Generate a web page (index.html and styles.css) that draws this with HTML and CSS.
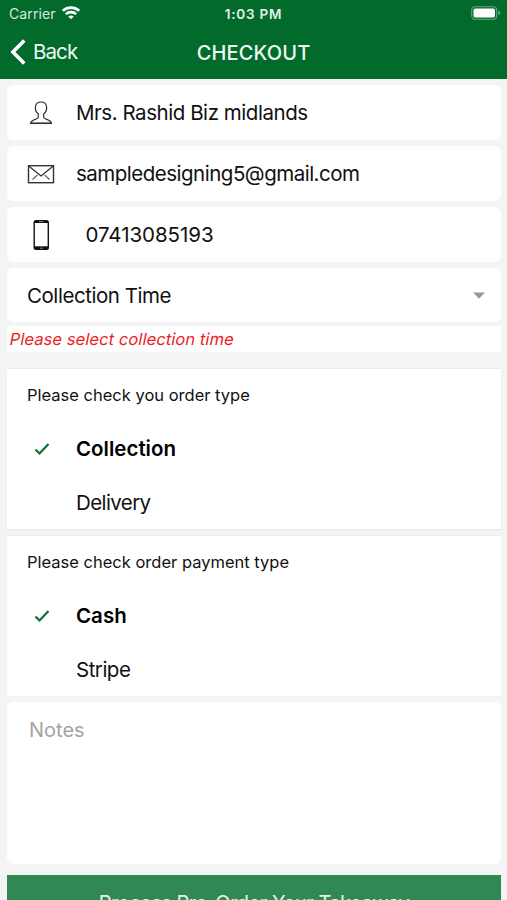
FILE: index.html
```
<!DOCTYPE html>
<html lang="en">
<head>
<meta charset="utf-8">
<title>Checkout</title>
<link rel="stylesheet" href="styles.css">
</head>
<body>
<header class="header">
  <div class="status">
    <div class="carrier"><span class="carrier-name">Carrier</span>
      <svg class="wifi" width="18" height="14" viewBox="0 0 18 14" fill="none" stroke="#fff" stroke-width="2.6"><path d="M.8 4.800C5.300.6 12.700.6 17.200 4.800M3.800 8.100C6.800 5.400 11.200 5.400 14.200 8.100"/><path d="M9 13.300 6.200 10.500Q9 8.300 11.800 10.500Z" fill="#fff" stroke="none"/></svg>
    </div>
    <span class="clock">1:03 PM</span>
    <svg class="battery" width="30" height="14" viewBox="0 0 30 14"><rect x=".7" y=".7" width="25" height="12.600" rx="3.500" fill="none" stroke="#69a77c" stroke-width="1.100"/><rect x="2.500" y="2.500" width="21.500" height="9" rx="1.800" fill="#fff"/><path d="M27.300 4.600Q29.500 6 29.500 7T27.300 9.400Z" fill="#69a77c"/></svg>
  </div>
  <nav class="nav">
    <a class="back"><svg width="16" height="26" viewBox="0 0 16 26" fill="none" stroke="#fff" stroke-width="3.600"><path d="M14.300 1.500 2.900 13l11.400 11.500"/></svg><span class="back-label">Back</span></a>
    <h1 class="title">CHECKOUT</h1>
  </nav>
</header>
<main class="form">
  <div class="field">
    <svg class="icon" width="28" height="32" viewBox="0 0 28 32" fill="none" stroke="#333" stroke-width="1.200"><path d="M11.300 20.500V17C8.400 14.500 8.200 11 8.500 9.500 8.900 6.300 10.900 5 14 5s5.100 1.300 5.500 4.500c.3 1.500.1 5-2.800 7.500v3.500c1 2 7.300 2.200 7.700 5.800H3.600c.4-3.600 6.700-3.800 7.700-5.800Z"/><path d="M3.200 26.300h21.600" stroke-width="1.500"/></svg>
    <span class="value name">Mrs. Rashid Biz midlands</span>
  </div>
  <div class="field">
    <svg class="icon" width="28" height="32" viewBox="0 0 28 32" fill="none" stroke="#333" stroke-width="1.100"><rect x="1.500" y="7.700" width="25" height="17" stroke-width="1.400"/><path d="M2 8.200 14 18 26 8.200" stroke-width="1.300"/><path d="m5.500 21.500 5-4.700M22.500 21.500l-5-4.700" stroke="#555"/></svg>
    <span class="value email">sampledesigning5@gmail.com</span>
  </div>
  <div class="field">
    <svg class="icon" width="28" height="32" viewBox="0 0 28 32"><rect x="6.500" y="1" width="15.500" height="30" rx="2.500" fill="#111"/><path d="M7.900 4h12.700v23.300H7.900Z" fill="#fff"/><path d="M12 2.500h4.500M13 29.200h2.800" stroke="#888" stroke-width="1"/></svg>
    <span class="value phone">07413085193</span>
  </div>
  <div class="field select">
    <span class="value time">Collection Time</span>
    <svg class="caret" width="12" height="7" viewBox="0 0 12 7"><path d="M0 .5h12L6 6.700Z" fill="#999"/></svg>
  </div>
  <p class="error"><span class="error-text">Please select collection time</span></p>
  <section class="card">
    <h2 class="question">Please check you order type</h2>
    <div class="option selected"><svg class="check" width="16" height="14" viewBox="0 0 16 14"><path d="m1.500 7.500 4 4L14.500 2" fill="none" stroke="#0b7032" stroke-width="2.200"/></svg><span class="collection">Collection</span></div>
    <div class="option"><span class="delivery">Delivery</span></div>
  </section>
  <section class="card payment">
    <h2 class="question">Please check order payment type</h2>
    <div class="option selected"><svg class="check" width="16" height="14" viewBox="0 0 16 14"><path d="m1.500 7.500 4 4L14.500 2" fill="none" stroke="#0b7032" stroke-width="2.200"/></svg><span class="cash">Cash</span></div>
    <div class="option"><span class="stripe">Stripe</span></div>
  </section>
  <div class="notes">Notes</div>
  <button class="submit">Process Pre-Order Your Takeaway</button>
</main>
</body>
</html>
```
FILE: styles.css
```
* { box-sizing: border-box; }
body {
  margin: 0;
  height: 900px;
  overflow: hidden;
  background: #f4f4f4;
  color: #111;
  font-family: Inter, "Liberation Sans", sans-serif;
}
h1, h2, p { margin: 0; font-weight: 400; }
svg { flex: none; display: block; }
.header { height: 79px; background: #026b2c; color: #fff; }
.status {
  display: grid;
  grid-template-columns: 1fr auto 1fr;
  align-items: center;
  height: 27px;
  padding: 0 6px 0 9px;
  font-size: 14px;
}
.carrier { display: flex; align-items: center; gap: 6px; color: #d9eadf; }
.carrier-name { letter-spacing: .1px; }
.wifi { margin-top: -1px; }
.clock { margin-right: 3px; font-size: 13.5px; font-weight: 600; color: #e5f1e8; letter-spacing: .75px; }
.battery { justify-self: end; margin-top: -1px; }
.nav {
  display: grid;
  grid-template-columns: 1fr auto 1fr;
  align-items: center;
  height: 50px;
  padding: 0 10px;
}
.back { display: flex; align-items: center; gap: 7px; font-size: 20.5px; color: #eff7f1; }
.back-label { padding-bottom: 2px; letter-spacing: -.9px; }
.title { padding-top: 1px; font-size: 20px; font-weight: 500; color: #eff7f1; letter-spacing: .15px; }
.form { padding: 6px 6px 0 7px; }
.field {
  display: flex;
  align-items: center;
  height: 55px;
  margin-bottom: 6px;
  padding-left: 20px;
  background: #fff;
  border-radius: 6px;
  font-size: 20.5px;
}
.icon { margin-right: 21px; }
.name { letter-spacing: -.45px; }
.email { letter-spacing: -.5px; }
.phone { margin-left: 9.500px; letter-spacing: -.05px; }
.time { letter-spacing: -.45px; }
.select { justify-content: space-between; height: 54px; margin-bottom: 4px; padding-right: 16px; }
.error {
  height: 26px;
  padding-left: 3px;
  background: #fff;
  color: #ed2323;
  font-size: 16.5px;
  line-height: 26px;
}
.error-text { display: inline-block; letter-spacing: .09px; transform: skewX(-11deg); }
.card {
  height: 160px;
  margin-top: 17px;
  background: #fff;
  box-shadow: 0 -1px 1px #ebebeb, 0 1px 1px #e6e6e6;
}
.payment { margin-top: 7px; box-shadow: 0 -1px 1px #ebebeb; }
.question { height: 53px; padding: 0 20px; font-size: 16.5px; line-height: 53px; }
.option {
  display: flex;
  align-items: center;
  height: 54px;
  padding-left: 69px;
  font-size: 20.5px;
}
.option span { padding-bottom: 2px; }
.selected { padding-left: 27px; color: #000; font-weight: 600; }
.check { margin-right: 26px; }
.delivery { letter-spacing: -.6px; }
.stripe { letter-spacing: -.5px; }
.notes {
  height: 162px;
  margin-top: 6px;
  padding: 16px 22px;
  background: #fff;
  border-radius: 6px;
  color: #a3a3a3;
  font-size: 20px;
  line-height: 24px;
}
.submit {
  display: block;
  width: 100%;
  height: 55px;
  margin-top: 11px;
  padding: 0;
  border: 0;
  background: #308852;
  color: #e7f3eb;
  font-family: inherit;
  font-size: 20px;
  letter-spacing: -.5px;
}
```
